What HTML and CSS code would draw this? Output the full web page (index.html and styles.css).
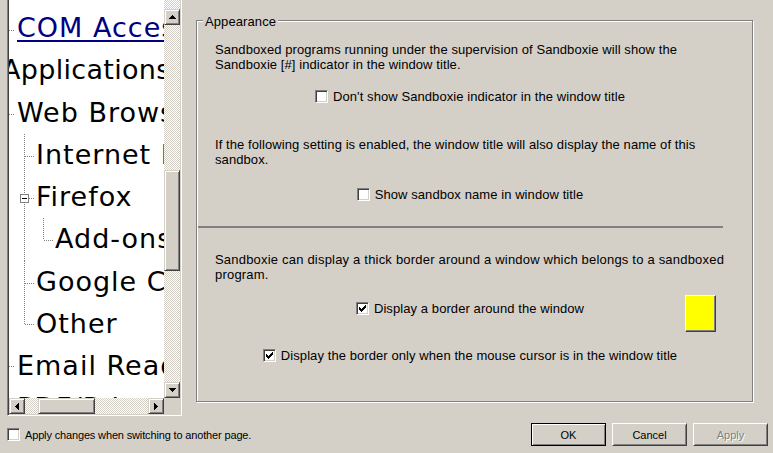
FILE: index.html
```html
<!DOCTYPE html>
<html>
<head>
<meta charset="utf-8">
<link rel="stylesheet" href="styles.css">
</head>
<body>
<div class="top">
  <div class="tree">
    <div class="tree-main">
      <div class="tree-content">
        <div class="node"><svg class="gut" width="8" height="43"><path class="dot" d="M0 23.5h6"/></svg><span class="label hot">COM Access</span></div>
        <div class="node"><span class="label apps">Applications</span></div>
        <div class="node"><svg class="gut" width="8" height="43"><path class="dot" d="M0 22.5h6"/></svg><span class="label">Web Browsers</span></div>
        <div class="node"><svg class="gut" width="27" height="43"><path class="dot" d="M15.5 0v43"/><path class="dot" d="M16 22.5h9"/></svg><span class="label">Internet Explorer</span></div>
        <div class="node"><svg class="gut" width="27" height="43"><path class="dot" d="M15.5 0v18"/><path class="dot" d="M15.5 28v15"/><rect class="box" x="11.5" y="18.5" width="8" height="8"/><path class="minus" d="M13 22.5h5"/><path class="dot" d="M20 22.5h5"/></svg><span class="label">Firefox</span></div>
        <div class="node"><svg class="gut" width="46" height="43"><path class="dot" d="M15.5 0v43"/><path class="dot" d="M34.5 0v22"/><path class="dot" d="M35 22.5h9"/></svg><span class="label">Add-ons</span></div>
        <div class="node"><svg class="gut" width="27" height="43"><path class="dot" d="M15.5 0v43"/><path class="dot" d="M16 22.5h9"/></svg><span class="label">Google Chrome</span></div>
        <div class="node"><svg class="gut" width="27" height="43"><path class="dot" d="M15.5 0v21"/><path class="dot" d="M16 21.5h9"/></svg><span class="label">Other</span></div>
        <div class="node"><svg class="gut" width="8" height="43"><path class="dot" d="M0 21.5h6"/></svg><span class="label">Email Readers</span></div>
        <div class="node"><svg class="gut" width="8" height="43"><path class="dot" d="M0 21.5h6"/></svg><span class="label">PDF/Print</span></div>
      </div>
      <div class="vscroll">
        <div class="track vtop"></div>
        <div class="sbtn"><svg width="7" height="4"><path d="M3 0h1v1h-1z M2 1h3v1h-3z M1 2h5v1h-5z M0 3h7v1h-7z"/></svg></div>
        <div class="track vpre"></div>
        <div class="thumb vthumb"></div>
        <div class="track grow"></div>
        <div class="sbtn"><svg width="7" height="4"><path d="M0 0h7v1h-7z M1 1h5v1h-5z M2 2h3v1h-3z M3 3h1v1h-1z"/></svg></div>
      </div>
    </div>
    <div class="hscroll">
      <div class="sbtn"><svg width="4" height="7"><path d="M3 0h1v7h-1z M2 1h1v5h-1z M1 2h1v3h-1z M0 3h1v1h-1z"/></svg></div>
      <div class="track hpre"></div>
      <div class="thumb hthumb"></div>
      <div class="track grow"></div>
      <div class="sbtn"><svg width="4" height="7"><path d="M0 0h1v7h-1z M1 1h1v5h-1z M2 2h1v3h-1z M3 3h1v1h-1z"/></svg></div>
      <div class="corner"></div>
    </div>
  </div>

  <div class="group">
    <div class="legend">Appearance</div>
    <p class="para p1">Sandboxed programs running under the supervision of Sandboxie will show the<br>Sandboxie [#] indicator in the window title.</p>
    <div class="cbrow r1"><span class="cb"></span><span>Don&#39;t show Sandboxie indicator in the window title</span></div>
    <p class="para p2">If the following setting is enabled, the window title will also display the name of this<br>sandbox.</p>
    <div class="cbrow r2"><span class="cb"></span><span>Show sandbox name in window title</span></div>
    <div class="sep"></div>
    <p class="para p3">Sandboxie can display a thick border around a window which belongs to a sandboxed<br>program.</p>
    <div class="swrow">
      <div class="cbrow mid"><span class="cb"><svg width="7" height="7"><path d="M6 0h1v1h-1z M5 1h2v1h-2z M0 2h1v1h-1z M4 2h3v1h-3z M0 3h2v1h-2z M3 3h3v1h-3z M0 4h5v1h-5z M1 5h3v1h-3z M2 6h1v1h-1z"/></svg></span><span>Display a border around the window</span></div>
      <div class="swatch"></div>
    </div>
    <div class="cbrow r4"><span class="cb"><svg width="7" height="7"><path d="M6 0h1v1h-1z M5 1h2v1h-2z M0 2h1v1h-1z M4 2h3v1h-3z M0 3h2v1h-2z M3 3h3v1h-3z M0 4h5v1h-5z M1 5h3v1h-3z M2 6h1v1h-1z"/></svg></span><span>Display the border only when the mouse cursor is in the window title</span></div>
  </div>
</div>

<div class="bottom">
  <div class="applyrow"><span class="cb"></span><span class="applytext">Apply changes when switching to another page.</span></div>
  <div class="buttons">
    <button class="btn default">OK</button>
    <button class="btn">Cancel</button>
    <button class="btn disabled">Apply</button>
  </div>
</div>
</body>
</html>
```
FILE: styles.css
```css
* { box-sizing: border-box; }

body {
  margin: 0;
  width: 773px;
  height: 453px;
  overflow: hidden;
  background: #d4d0c8;
  font-family: "Liberation Sans", Arial, sans-serif;
  font-size: 11px;
  color: #000;
}

.top {
  display: flex;
  align-items: flex-start;
  padding-left: 7px;
  height: 416px;
}

/* ---------- tree ---------- */
.tree {
  width: 175px;
  height: 416px;
  display: flex;
  flex-direction: column;
  border-left: 1px solid #808080;
  border-right: 1px solid #fff;
  border-bottom: 1px solid #fff;
  padding: 0 1px 1px 1px;
  box-shadow: inset 1px 0 0 #404040, inset -1px -1px 0 #d4d0c8;
}

.tree-main {
  display: flex;
  height: 398px;
}

.tree-content {
  width: 155px;
  height: 398px;
  overflow: hidden;
  background: #fff;
  padding-top: 7px;
  font-family: "DejaVu Sans", sans-serif;
  font-size: 27px;
  letter-spacing: 1px;
}

.node {
  display: flex;
  height: 42.25px;
  line-height: 42.25px;
  white-space: nowrap;
}

.gut {
  flex: none;
  overflow: visible;
  shape-rendering: crispEdges;
}

.dot {
  stroke: #808080;
  stroke-width: 1;
  stroke-dasharray: 1 1;
  fill: none;
}

.box {
  stroke: #808080;
  fill: #fff;
}

.minus {
  stroke: #000;
  fill: none;
}

.label { flex: none; }

.label.hot {
  color: #000080;
  text-decoration: underline;
  text-decoration-thickness: 2px;
  text-underline-offset: 3px;
}

.label.apps { margin-left: -7px; letter-spacing: 0.3px; }

/* ---------- scrollbars ---------- */
.track {
  background: repeating-conic-gradient(#d4d0c8 0 25%, #fff 0 50%) 0 0 / 2px 2px;
}

.grow { flex: 1; }

.vscroll {
  width: 16px;
  height: 398px;
  display: flex;
  flex-direction: column;
}

.vtop { height: 9px; }
.vpre { height: 145px; }

.sbtn, .thumb {
  flex: none;
  width: 16px;
  height: 16px;
  background: #d4d0c8;
  border: 1px solid;
  border-color: #d4d0c8 #404040 #404040 #d4d0c8;
  box-shadow: inset 1px 1px 0 #fff, inset -1px -1px 0 #808080;
  display: flex;
  align-items: center;
  justify-content: center;
}

.sbtn svg {
  display: block;
  shape-rendering: crispEdges;
}

.vthumb { height: 101px; }

.hscroll {
  height: 16px;
  display: flex;
}

.hpre { width: 13px; }
.hthumb { width: 57px; height: 16px; }

.corner {
  width: 16px;
  background: #d4d0c8;
}

/* ---------- group box ---------- */
.group {
  margin: 20px 0 0 14px;
  width: 557px;
  height: 382px;
  border: 1px solid #808080;
  box-shadow: inset 1px 1px 0 #fff, 1px 1px 0 #fff;
  padding: 0 20px 0 18px;
  font-size: 13px;
  line-height: 15px;
  letter-spacing: 0.08px;
}

.legend {
  width: max-content;
  margin: -7px 0 0 -12px;
  padding: 0 2px;
  background: #d4d0c8;
  letter-spacing: 0.1px;
}

.para {
  margin: 0;
  white-space: nowrap;
}

.p1 { margin-top: 13px; }
.p2 { margin-top: 33px; }
.p3 { margin-top: 24px; }
.p3 { letter-spacing: 0.2px; }

.cbrow {
  display: flex;
  justify-content: center;
  align-items: center;
  height: 15px;
  white-space: nowrap;
  margin-right: 7px;
}

.r1 { margin-top: 17px; }
.r2 { margin-top: 20px; }
.r4 { margin-top: 16px; }

.cb {
  flex: none;
  width: 13px;
  height: 13px;
  margin-right: 5px;
  background: #fff;
  border: 1px solid;
  border-color: #808080 #fff #fff #808080;
  box-shadow: inset 1px 1px 0 #404040, inset -1px -1px 0 #d4d0c8;
  display: flex;
  align-items: center;
  justify-content: center;
}

.cb svg {
  display: block;
  shape-rendering: crispEdges;
}

.sep {
  margin: 24px 0 0 -17px;
  width: 525px;
  height: 2px;
  background: #808080;
}

.swrow {
  margin-top: 19px;
  display: grid;
  grid-template-columns: 1fr auto 1fr;
  align-items: start;
  margin-right: 7px;
}

.swrow .mid { grid-column: 2; margin-right: 0; }

.swatch {
  grid-column: 3;
  justify-self: end;
  margin: -6px 9px 0 0;
  width: 31px;
  height: 37px;
  background: #ffff00;
  border: 1px solid;
  border-color: #fff #404040 #404040 #fff;
  box-shadow: inset -1px -1px 0 #808080;
}

/* ---------- bottom ---------- */
.bottom {
  display: flex;
  align-items: center;
  height: 37px;
  padding: 0 5px 0 7px;
}

.applyrow {
  display: flex;
  align-items: center;
  white-space: nowrap;
}

.applytext { letter-spacing: -0.15px; }

.buttons {
  margin-left: auto;
  display: flex;
  gap: 6px;
}

.btn {
  width: 75px;
  height: 23px;
  padding: 0;
  font-family: "Liberation Sans", Arial, sans-serif;
  font-size: 11px;
  color: #000;
  background: #d4d0c8;
  border: 1px solid;
  border-color: #fff #404040 #404040 #fff;
  box-shadow: inset 1px 1px 0 #d4d0c8, inset -1px -1px 0 #808080;
}

.btn.default {
  border-color: #000;
  box-shadow: inset 1px 1px 0 #fff, inset -1px -1px 0 #808080;
}

.btn.disabled {
  color: #808080;
  text-shadow: 1px 1px 0 #fff;
}
```
